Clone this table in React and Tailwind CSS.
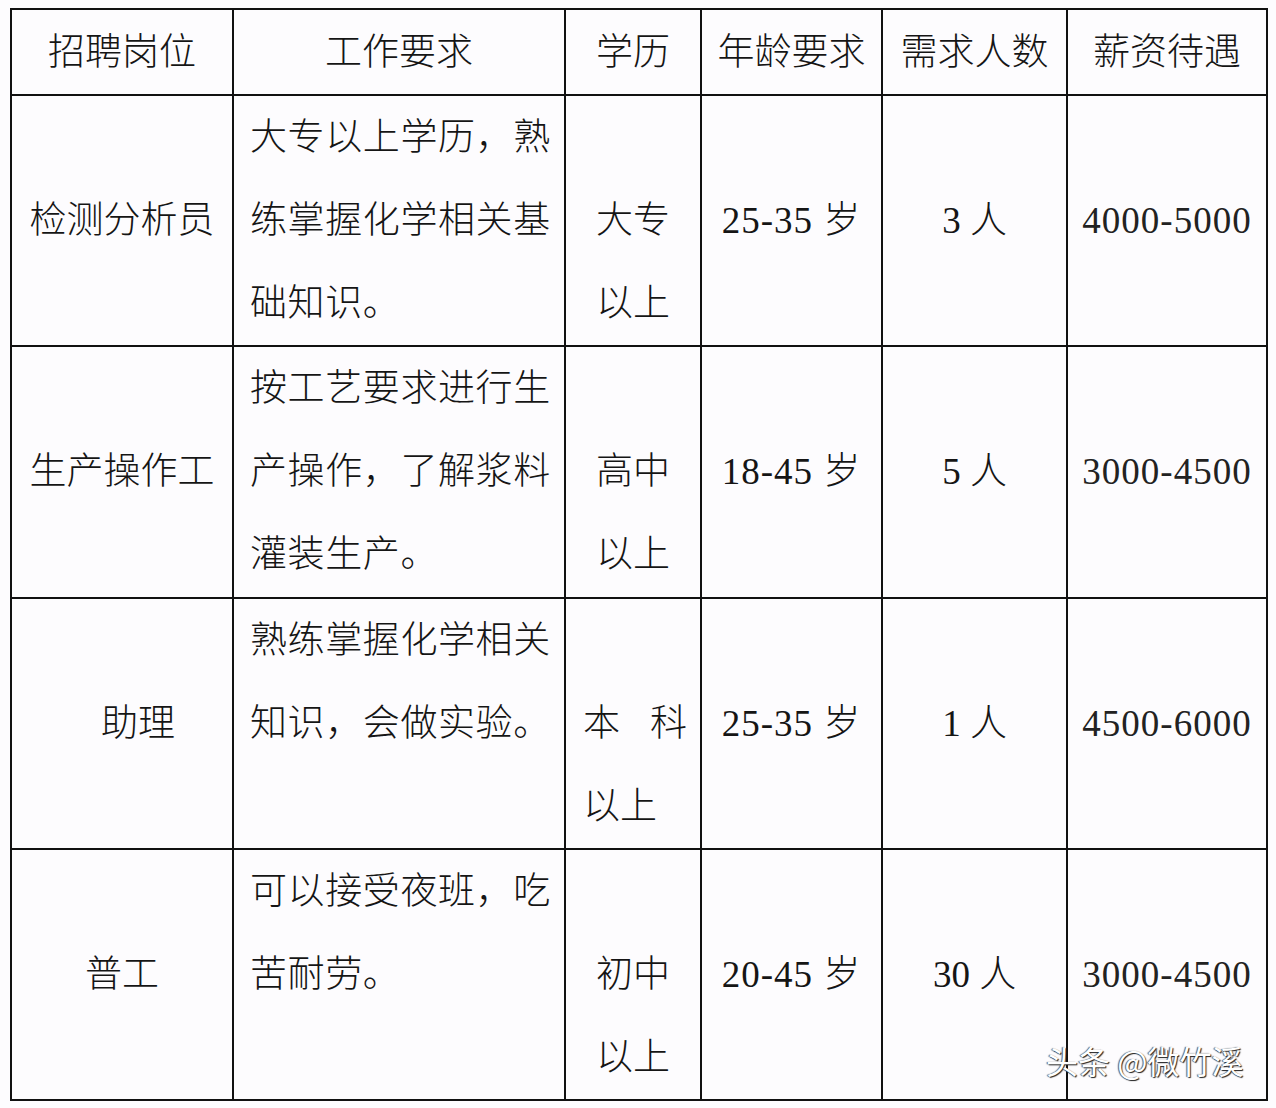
import React from 'react'

const CJK = "font-['Liberation_Serif','Noto_Sans_CJK_SC',serif]"

const COLS = [222, 332, 136, 181, 185, 200]

const HEAD = ['招聘岗位', '工作要求', '学历', '年龄要求', '需求人数', '薪资待遇']

const ROWS = [
  {
    h: 'h-[250px]',
    post: '检测分析员',
    req: ['大专以上学历，熟', '练掌握化学相关基', '础知识。'],
    edu: ['大专', '以上'],
    age: '25-35 岁',
    num: '3 人',
    pay: '4000-5000',
  },
  {
    h: 'h-[252px]',
    post: '生产操作工',
    req: ['按工艺要求进行生', '产操作，了解浆料', '灌装生产。'],
    edu: ['高中', '以上'],
    age: '18-45 岁',
    num: '5 人',
    pay: '3000-4500',
  },
  {
    h: 'h-[250px]',
    post: '助理',
    postClass: 'pl-8',
    req: ['熟练掌握化学相关', '知识，会做实验。'],
    edu: null,
    age: '25-35 岁',
    num: '1 人',
    pay: '4500-6000',
  },
  {
    h: 'h-[251px]',
    post: '普工',
    req: ['可以接受夜班，吃', '苦耐劳。'],
    edu: ['初中', '以上'],
    age: '20-45 岁',
    num: '30 人',
    pay: '3000-4500',
  },
]

const cell = 'border-2 border-[#111] p-0'

export default function App() {
  return (
    <div className={`w-[1276px] h-[1108px] bg-[#fdfcfe] relative overflow-hidden pt-[8px] pl-[10px] ${CJK} text-[#151515] text-[37px] font-light`}>
      <table className="table-fixed border-collapse w-[1258px]">
        <colgroup>
          {COLS.map((w, i) => (
            <col key={i} style={{ width: w }} />
          ))}
        </colgroup>
        <thead>
          <tr className="h-[86px]">
            {HEAD.map((t) => (
              <th key={t} className={`${cell} font-light text-center align-middle leading-none`}>
                {t}
              </th>
            ))}
          </tr>
        </thead>
        <tbody>
          {ROWS.map((r, i) => (
            <tr key={i} className={r.h}>
              <td className={`${cell} text-center align-middle ${r.postClass || ''}`}>{r.post}</td>
              <td className={`${cell} align-top pl-[16px] leading-[83px]`}>
                {r.req.map((l) => (
                  <div key={l} className="whitespace-nowrap tracking-[0.6px]">{l}</div>
                ))}
              </td>
              <td className={`${cell} align-top pt-[83px] leading-[83px]`}>
                {r.edu ? (
                  r.edu.map((l) => (
                    <div key={l} className="text-center">{l}</div>
                  ))
                ) : (
                  <div className="px-[17px] pr-[13px]">
                    <div className="flex justify-between">
                      <span>本</span>
                      <span>科</span>
                    </div>
                    <div>以上</div>
                  </div>
                )}
              </td>
              <td className={`${cell} text-center align-middle tracking-[1px]`}>{r.age}</td>
              <td className={`${cell} text-center align-middle`}>{r.num}</td>
              <td className={`${cell} text-center align-middle tracking-[1px] text-[#222]`}>{r.pay}</td>
            </tr>
          ))}
        </tbody>
      </table>

      <div className="absolute left-[1046px] top-[1044px] font-['Noto_Sans_CJK_SC',sans-serif] font-normal text-[32px] leading-none text-white [text-shadow:1px_1px_1px_#222,-1px_0_1px_#555]">
        头条 @微竹溪
      </div>
    </div>
  )
}
